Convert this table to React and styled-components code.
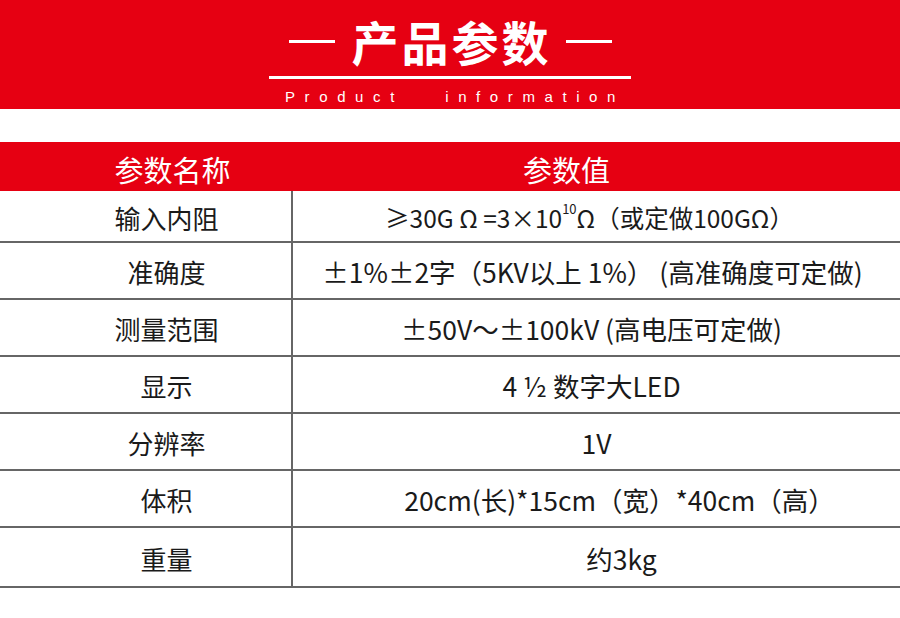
import React from "react";
import styled, { createGlobalStyle } from "styled-components";

const Sup = styled.span`
  font-size: 13px;
  position: relative;
  top: -9px;
`;

const rows = [
  { name: "输入内阻", value: <>≥30G Ω =3×10<Sup>10</Sup>Ω（或定做100GΩ）</>, h: 52, size: 24.5, shift: -14 },
  { name: "准确度", value: "±1%±2字（5KV以上 1%） (高准确度可定做)", h: 57, shift: -8 },
  { name: "测量范围", value: "±50V～±100kV (高电压可定做)", h: 57, shift: -10 },
  { name: "显示", value: "4 ½ 数字大LED", h: 57, shift: -10 },
  { name: "分辨率", value: "1V", h: 57 },
  { name: "体积", value: "20cm(长)*15cm（宽）*40cm（高）", h: 57, shift: 46 },
  { name: "重量", value: "约3kg", h: 60, shift: 50 },
];

const App = () => {
  return (
    <Page>
      <GlobalStyle />
      <Banner>
        <TitleRow>
          <Dash />
          <Title>产品参数</Title>
          <Dash />
        </TitleRow>
        <Rule />
        <Sub>Product&nbsp;&nbsp;&nbsp;information</Sub>
      </Banner>
      <Table>
        <HeadRow>
          <HeadCell $left>参数名称</HeadCell>
          <HeadCell>参数值</HeadCell>
        </HeadRow>
        {rows.map((r, i) => (
          <Row key={i} $h={r.h}>
            <NameCell>{r.name}</NameCell>
            <ValueCell $size={r.size} $shift={r.shift}>
              {r.value}
            </ValueCell>
          </Row>
        ))}
      </Table>
    </Page>
  );
};

export default App;

const GlobalStyle = createGlobalStyle`
  body {
    margin: 0;
    background: #fff;
    font-family: "Noto Sans CJK SC", "Noto Sans", sans-serif;
  }
`;

const Page = styled.div`
  width: 900px;
  height: 618px;
  overflow: hidden;
  background: #fff;
`;

const Banner = styled.div`
  height: 109px;
  background: #e60012;
  display: flex;
  flex-direction: column;
  align-items: center;
  color: #fff;
`;

const TitleRow = styled.div`
  display: flex;
  align-items: center;
  gap: 17px;
  margin-top: 12px;
  height: 58px;
`;

const Dash = styled.div`
  width: 46px;
  height: 3px;
  background: #fff;
`;

const Title = styled.div`
  font-size: 47px;
  font-weight: 700;
  letter-spacing: 3px;
  line-height: 58px;
  margin-right: -3px;
`;

const Rule = styled.div`
  width: 362px;
  height: 3px;
  background: #fff;
  margin-top: 6px;
`;

const Sub = styled.div`
  font-family: "Liberation Sans", Arial, sans-serif;
  font-size: 15px;
  letter-spacing: 9.6px;
  margin-top: 9px;
  margin-left: 10px;
  line-height: 18px;
`;

const Table = styled.div`
  margin-top: 33px;
`;

const HeadRow = styled.div`
  display: grid;
  grid-template-columns: 293px 1fr;
  height: 49px;
  background: #e60012;
`;

const HeadCell = styled.div`
  display: flex;
  align-items: center;
  justify-content: center;
  color: #fff;
  font-size: 29px;
  padding-left: ${(p) => (p.$left ? "52px" : "0")};
  padding-right: ${(p) => (p.$left ? "0" : "60px")};
  padding-top: 4px;
`;

const Row = styled.div`
  display: grid;
  grid-template-columns: 293px 1fr;
  height: ${(p) => p.$h}px;
  border-bottom: 2px solid #666;
  box-sizing: border-box;
`;

const NameCell = styled.div`
  display: flex;
  align-items: center;
  justify-content: center;
  padding-left: 42px;
  padding-top: 2px;
  font-size: 26px;
  color: #1a1a1a;
  border-right: 2px solid #666;
`;

const ValueCell = styled.div`
  display: flex;
  align-items: center;
  justify-content: center;
  padding-left: ${(p) => Math.max(p.$shift || 0, 0)}px;
  padding-right: ${(p) => Math.max(-(p.$shift || 0), 0)}px;
  padding-top: 2px;
  font-size: ${(p) => p.$size || 26.5}px;
  color: #1a1a1a;
  white-space: nowrap;
`;
